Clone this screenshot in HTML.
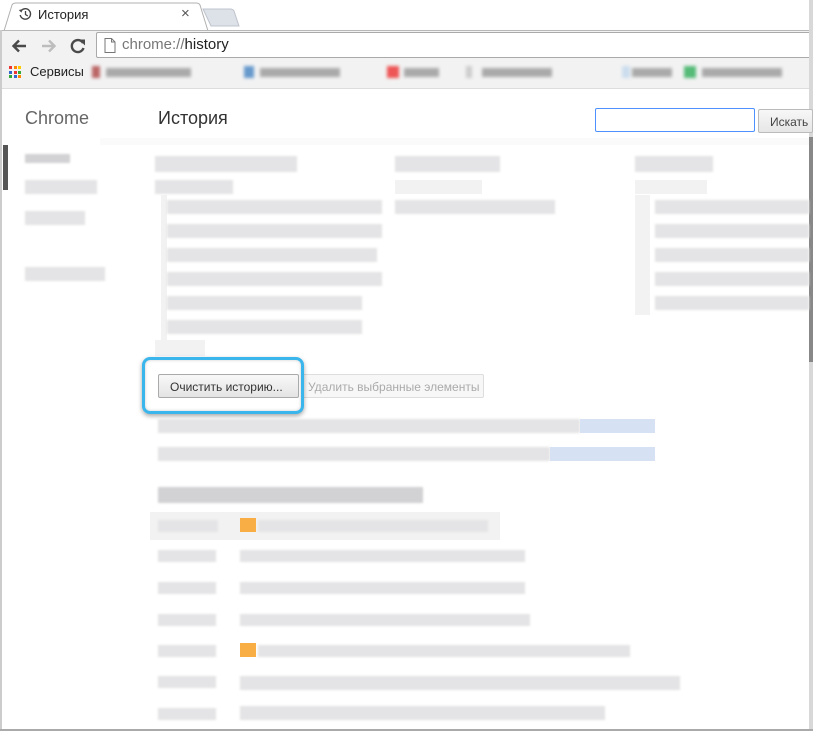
<!DOCTYPE html>
<html><head><meta charset="utf-8"><style>
*{margin:0;padding:0;box-sizing:border-box}
body{width:813px;height:731px;overflow:hidden;background:#fff;font-family:"Liberation Sans","DejaVu Sans",sans-serif;position:relative}
.a{position:absolute}
.b{position:absolute;background:#e4e4e6;filter:blur(1px)}
.d{position:absolute;background:#d2d2d4;filter:blur(1px)}
.l{position:absolute;background:#f2f2f3}
</style></head><body>
<!-- tab strip -->
<div class="a" style="left:0;top:0;width:813px;height:30px;background:#fff"></div>
<svg class="a" style="left:0;top:0" width="245" height="32"><path d="M4 31 L12 5 Q13 3 16 3 L196 3 Q199 3 200 5 L208 31" fill="#fff" stroke="#b0b0b0"/><path d="M203 9 L230 9 Q233 9 234 11 L239 26 L211 26 Z" fill="#dde1e8" stroke="#bfc4cc"/></svg>
<div class="a" style="left:18px;top:7px;width:14px;height:14px">
<svg width="14" height="14" viewBox="0 0 14 14"><path d="M3 4 A5.2 5.2 0 1 1 2.2 8" fill="none" stroke="#444" stroke-width="1.4"/><path d="M0.8 3 L3.4 5.6 L4.6 2.2 Z" fill="#444"/><path d="M7.5 4 V7.5 L9.8 9" fill="none" stroke="#444" stroke-width="1.3"/></svg></div>
<div class="a" style="left:38px;top:7px;font-size:13px;color:#222">История</div>
<div class="a" style="left:181px;top:5px;font-size:15px;color:#555">×</div>
<div class="a" style="left:0;top:30px;width:813px;height:58px;background:#f2f2f2;border-top:1px solid #b8b8b8"></div>
<!-- nav -->
<div class="a" style="left:10px;top:36px"><svg width="80" height="20"><path d="M16 10H4M9 4.5L3.5 10L9 15.5" fill="none" stroke="#4a4a4a" stroke-width="2.4"/><path d="M32 10H44M39 4.5L44.5 10L39 15.5" fill="none" stroke="#bdbdbd" stroke-width="2.4"/><path d="M73 7A6 6 0 1 0 73.5 12" fill="none" stroke="#4a4a4a" stroke-width="2.4"/><path d="M69 3.5L75 3.5L75 9.5Z" fill="#4a4a4a"/></svg></div>
<div class="a" style="left:96px;top:32px;width:717px;height:26px;background:#fff;border:1px solid #aaa;border-right:none;border-radius:2px 0 0 2px"></div>
<div class="a" style="left:104px;top:38px"><svg width="12" height="15"><path d="M1 .5H7.5L11 4V14.5H1Z M7.5 .5V4H11" fill="#fff" stroke="#777"/></svg></div>
<div class="a" style="left:122px;top:36px;font-size:15px;color:#777">chrome://<span style="color:#222">history</span></div>
<!-- bookmarks -->
<div class="a" style="left:9px;top:66px;width:13px;height:12px;display:grid;grid-template-columns:repeat(3,3px);gap:1.5px">
<i style="background:#e33"></i><i style="background:#f80"></i><i style="background:#fc0"></i><i style="background:#36c"></i><i style="background:#e33"></i><i style="background:#3a3"></i><i style="background:#3a3"></i><i style="background:#36c"></i><i style="background:#f80"></i></div>
<div class="a" style="left:30px;top:64px;font-size:13px;color:#222">Сервисы</div>
<div class="a" style="left:92px;top:66px;width:720px;height:14px;filter:blur(1.5px)">
<div class="a" style="left:0;width:8px;height:12px;background:#b66"></div><div class="a" style="left:14px;top:2px;width:85px;height:9px;background:#aaa"></div>
<div class="a" style="left:152px;width:10px;height:12px;background:#69c"></div><div class="a" style="left:168px;top:2px;width:80px;height:9px;background:#aaa"></div>
<div class="a" style="left:295px;width:12px;height:12px;background:#e55"></div><div class="a" style="left:312px;top:2px;width:35px;height:9px;background:#aaa"></div>
<div class="a" style="left:374px;width:6px;height:12px;background:#ccc"></div><div class="a" style="left:390px;top:2px;width:70px;height:9px;background:#aaa"></div>
<div class="a" style="left:530px;width:8px;height:12px;background:#cde"></div><div class="a" style="left:540px;top:2px;width:40px;height:9px;background:#aaa"></div>
<div class="a" style="left:592px;width:12px;height:12px;background:#5b7"></div><div class="a" style="left:610px;top:2px;width:80px;height:9px;background:#aaa"></div>
</div>
<div class="a" style="left:0;top:88px;width:813px;height:1px;background:#ddd"></div>
<!-- window borders & scrollbar -->
<div class="a" style="left:0;top:30px;width:2px;height:701px;background:#ccc"></div>
<div class="a" style="left:809px;top:0;width:4px;height:731px;background:#d8d8d8"></div>
<div class="a" style="left:809px;top:137px;width:4px;height:225px;background:#888"></div>
<div class="a" style="left:0;top:729px;width:813px;height:2px;background:#aaa"></div>
<!-- header -->
<div class="a" style="left:25px;top:108px;font-size:18px;color:#666">Chrome</div>
<div class="a" style="left:158px;top:108px;font-size:18px;color:#333">История</div>
<div class="a" style="left:595px;top:108px;width:160px;height:24px;border:1px solid #4d90fe;border-radius:2px"></div>
<div class="a" style="left:758px;top:109px;width:55px;height:24px;background:linear-gradient(#f7f7f7,#e6e6e6);border:1px solid #bbb;border-radius:2px;font-size:12px;color:#444;padding:5px 0 0 11px">Искать</div>
<div class="a" style="left:100px;top:138px;width:709px;height:7px;background:#fafafa"></div>
<!-- sidebar -->
<div class="a" style="left:3px;top:145px;width:5px;height:45px;background:#555"></div>
<div class="d" style="left:25px;top:154px;width:45px;height:9px"></div>
<div class="b" style="left:25px;top:180px;width:72px;height:14px"></div>
<div class="b" style="left:25px;top:211px;width:60px;height:14px"></div>
<div class="b" style="left:25px;top:267px;width:80px;height:14px"></div>
<!-- columns -->
<div class="b" style="left:155px;top:156px;width:142px;height:16px"></div>
<div class="b" style="left:155px;top:180px;width:78px;height:14px"></div>
<div class="l" style="left:161px;top:195px;width:6px;height:145px"></div>
<div class="b" style="left:167px;top:200px;width:215px;height:14px"></div>
<div class="b" style="left:167px;top:224px;width:215px;height:14px"></div>
<div class="b" style="left:167px;top:248px;width:210px;height:14px"></div>
<div class="b" style="left:167px;top:272px;width:215px;height:14px"></div>
<div class="b" style="left:167px;top:296px;width:195px;height:14px"></div>
<div class="b" style="left:167px;top:320px;width:195px;height:14px"></div>
<div class="l" style="left:155px;top:340px;width:50px;height:16px"></div>
<div class="b" style="left:395px;top:156px;width:105px;height:16px"></div>
<div class="l" style="left:395px;top:180px;width:87px;height:14px"></div>
<div class="b" style="left:395px;top:200px;width:160px;height:14px"></div>
<div class="b" style="left:635px;top:156px;width:78px;height:16px"></div>
<div class="l" style="left:635px;top:180px;width:72px;height:14px"></div>
<div class="l" style="left:635px;top:195px;width:15px;height:120px"></div>
<div class="b" style="left:655px;top:200px;width:154px;height:14px"></div>
<div class="b" style="left:655px;top:224px;width:154px;height:14px"></div>
<div class="b" style="left:655px;top:248px;width:154px;height:14px"></div>
<div class="b" style="left:655px;top:272px;width:154px;height:14px"></div>
<div class="b" style="left:655px;top:296px;width:154px;height:14px"></div>
<!-- buttons -->
<div class="a" style="left:297px;top:374px;width:187px;height:24px;background:#f7f7f7;border:1px solid #ddd;border-radius:2px;font-size:12px;color:#aaa;padding:5px 0 0 10px">Удалить выбранные элементы</div>
<div class="a" style="left:142px;top:357px;width:162px;height:57px;border:3px solid #3bb6ec;border-radius:8px;background:#fff;box-shadow:0 2px 5px rgba(0,0,0,.35), inset 0 0 3px rgba(0,0,0,.2)"></div>
<div class="a" style="left:158px;top:374px;width:141px;height:24px;background:linear-gradient(#f8f8f8,#e4e4e4);border:1px solid #aaa;border-radius:2px;font-size:12px;color:#333;padding:5px 0 0 11px">Очистить историю...</div>
<!-- notes -->
<div class="b" style="left:158px;top:419px;width:422px;height:14px"></div>
<div class="a" style="left:580px;top:419px;width:75px;height:14px;background:#d6e2f4"></div>
<div class="b" style="left:158px;top:447px;width:392px;height:14px"></div>
<div class="a" style="left:550px;top:447px;width:105px;height:14px;background:#d6e2f4"></div>
<div class="d" style="left:158px;top:487px;width:265px;height:16px"></div>
<!-- day rows -->
<div class="l" style="left:150px;top:512px;width:350px;height:28px"></div>
<div class="b" style="left:158px;top:520px;width:60px;height:12px"></div>
<div class="a" style="left:240px;top:518px;width:16px;height:14px;background:#f9ae45"></div>
<div class="b" style="left:258px;top:520px;width:230px;height:12px"></div>
<div class="b" style="left:158px;top:550px;width:58px;height:12px"></div><div class="b" style="left:240px;top:550px;width:285px;height:12px"></div>
<div class="b" style="left:158px;top:582px;width:58px;height:12px"></div><div class="b" style="left:240px;top:582px;width:285px;height:12px"></div>
<div class="b" style="left:158px;top:614px;width:58px;height:12px"></div><div class="b" style="left:240px;top:614px;width:290px;height:12px"></div>
<div class="b" style="left:158px;top:645px;width:58px;height:12px"></div>
<div class="a" style="left:240px;top:643px;width:16px;height:14px;background:#f9ae45"></div>
<div class="b" style="left:258px;top:645px;width:372px;height:12px"></div>
<div class="b" style="left:158px;top:676px;width:58px;height:12px"></div><div class="b" style="left:240px;top:676px;width:440px;height:14px"></div>
<div class="b" style="left:158px;top:708px;width:58px;height:12px"></div><div class="b" style="left:240px;top:706px;width:365px;height:14px"></div>
</body></html>
